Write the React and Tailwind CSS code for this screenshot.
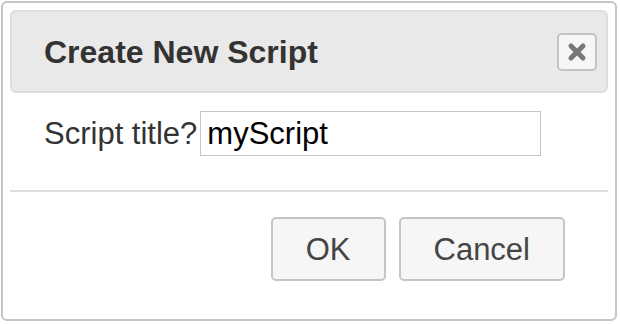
export default function App() {
  const font = { fontFamily: '"Liberation Sans", Arial, Helvetica, sans-serif' };
  return (
    <div className="w-[620px] h-[324px] bg-white pl-[1px] pt-[1px]" style={font}>
      <div className="w-[616px] h-[320px] border-2 border-[#c5c5c5] rounded-[6px] pl-[7px] pr-[7px] pt-[7px] flex flex-col">
        <div className="h-[83px] border-2 border-[#dddddd] bg-[#e9e9e9] rounded-[6px] flex items-center justify-between pl-[32px] pr-[9px]">
          <span className="text-[32px] font-bold text-[#333333] leading-none">Create New Script</span>
          <button className="w-[40px] h-[38px] border-2 border-[#c5c5c5] bg-[#f6f6f6] rounded-[5px] flex items-center justify-center">
            <svg width="20" height="20" viewBox="0 0 20 20">
              <path d="M4 4 L16 16 M16 4 L4 16" stroke="#777777" strokeWidth="5" strokeLinecap="round" />
            </svg>
          </button>
        </div>
        <div className="flex items-center pl-[34px] mt-[18px]">
          <span className="text-[31px] text-[#333333] leading-none">Script title?</span>
          <div className="ml-[3px] w-[341px] h-[45px] border border-[#c5c5c5] flex items-center pl-[6px]">
            <span className="text-[31px] text-black leading-none">myScript</span>
          </div>
        </div>
        <div className="mt-[34px] h-[2px] bg-[#dddddd]"></div>
        <div className="flex justify-end gap-[13px] mt-[25px] pr-[43px]">
          <button className="h-[64px] px-[33px] border-2 border-[#c5c5c5] bg-[#f6f6f6] rounded-[5px] text-[31px] text-[#454545] leading-none">OK</button>
          <button className="h-[64px] px-[33px] border-2 border-[#c5c5c5] bg-[#f6f6f6] rounded-[5px] text-[31px] text-[#454545] leading-none">Cancel</button>
        </div>
      </div>
    </div>
  );
}
